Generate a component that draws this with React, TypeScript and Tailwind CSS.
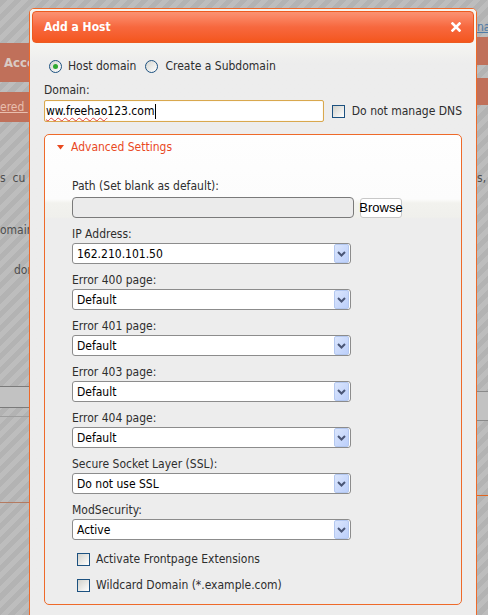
import React from "react";

const font = "font-['DejaVu_Sans_Condensed','DejaVu_Sans',sans-serif] [font-stretch:condensed]";

type Field = { label: string; value: string };

const fields: Field[] = [
  { label: "IP Address:", value: "162.210.101.50" },
  { label: "Error 400 page:", value: "Default" },
  { label: "Error 401 page:", value: "Default" },
  { label: "Error 403 page:", value: "Default" },
  { label: "Error 404 page:", value: "Default" },
  { label: "Secure Socket Layer (SSL):", value: "Do not use SSL" },
  { label: "ModSecurity:", value: "Active" },
];

function Radio({ checked }: { checked?: boolean }) {
  return (
    <span className="flex h-[13px] w-[13px] items-center justify-center rounded-full border border-[#1c5180] bg-linear-to-br from-[#d6d6d0] to-white">
      {checked && <span className="h-[5px] w-[5px] rounded-full bg-[#2fa82f]" />}
    </span>
  );
}

function Checkbox() {
  return (
    <span className="block h-[13px] w-[13px] shrink-0 border border-[#1c5180] bg-linear-to-br from-[#d2d2cc] to-white" />
  );
}

function Select({ value }: { value: string }) {
  return (
    <div className="flex h-[21px] w-[279px] items-center rounded-[3px] border border-[#8c8c8c] bg-white pl-[4px]">
      <span className="flex-1 text-[12px] leading-[14px] text-black">{value}</span>
      <span className="mr-[1px] flex h-[19px] w-[15px] items-center justify-center rounded-[2px] border border-[#b4c8f0] bg-linear-to-br from-[#dbe6fd] to-[#bccffa]">
        <svg width="9" height="6" viewBox="0 0 9 6">
          <path d="M1 1 L4.5 4.5 L8 1" fill="none" stroke="#4a5676" strokeWidth="2" />
        </svg>
      </span>
    </div>
  );
}

export default function App() {
  return (
    <div className={`relative h-[615px] w-[488px] overflow-hidden ${font}`}>
      {/* page behind the dialog */}
      <div className="flex h-full justify-between bg-[repeating-linear-gradient(135deg,#b3b3b3_0px,#b3b3b3_5px,#bdbdbd_5px,#bdbdbd_10px)]">
        <div className="w-[29px] whitespace-nowrap">
          <div className="h-[43px]" />
          <div className="flex h-[39px] w-[29px] items-center bg-[#c0705a] pl-[4px] text-[13px] font-bold text-[#d9cbc5]">Acco</div>
          <div className="h-[10px]" />
          <div className="flex h-[30px] w-[29px] items-center bg-[#c0705a] text-[12px] text-[#e9bfae] underline">ered&nbsp;</div>
          <div className="h-[49px]" />
          <div className="text-[12px] leading-[14px] text-[#4e4e4e]">s&nbsp;&nbsp;cu</div>
          <div className="h-[38px]" />
          <div className="text-[12px] leading-[14px] text-[#4e4e4e]">omain</div>
          <div className="h-[26px]" />
          <div className="pl-[14px] text-[12px] leading-[14px] text-[#4e4e4e]">doma</div>
          <div className="h-[109px]" />
          <div className="h-[22px] border-y border-[#7a7a7a] bg-[#c2c2c2]" />
          <div className="h-[8px]" />
          <div className="h-px bg-[#9e9e9e]" />
          <div className="h-[85px]" />
          <div className="h-px bg-[#b47a60]" />
        </div>
        <div className="w-[11px] overflow-hidden whitespace-nowrap">
          <div className="h-[20px]" />
          <div className="h-[15px] text-[12px] leading-[14px] text-[#4f7ba6] underline">na</div>
          <div className="h-[2px]" />
          <div className="h-[28px] bg-[#c0705a]" />
          <div className="h-[13px]" />
          <div className="h-[27px] bg-[#c0705a]" />
          <div className="h-[66px]" />
          <div className="text-[12px] leading-[14px] text-[#4e4e4e]">s,</div>
          <div className="h-[206px]" />
          <div className="h-[30px] border-y border-[#8a8a8a] bg-[#c2c2c2]" />
          <div className="h-[74px]" />
          <div className="h-px bg-[#e0651f]" />
        </div>
      </div>

      {/* dialog */}
      <div className="absolute top-[8px] left-[29px] h-[640px] w-[448px] rounded-t-[5px] border border-[#ee6a2a] bg-[#ededed]">
        <div className="rounded-t-[4px] bg-[#f6f6f2] p-[2px] pb-0">
          <div className="flex h-[32px] items-center justify-between rounded-[4px] border border-[#ec5b20] bg-linear-to-b from-[#fb9272] via-[#f7683e] to-[#f4561b] pr-[12px] pl-[11px]">
            <span className="text-[12px] font-bold text-white">Add a Host</span>
            <svg width="10" height="10" viewBox="0 0 10 10">
              <path d="M1.5 1.5 L8.5 8.5 M8.5 1.5 L1.5 8.5" stroke="white" strokeWidth="2.6" strokeLinecap="square" />
            </svg>
          </div>
        </div>

        <div className="bg-linear-to-b from-[#f5f5f1] to-[#ededed] to-[20px] px-[14px] pt-[15px] text-[12px] leading-[14px] text-[#2e2e2e]">
          <div className="flex h-[16px] items-center pl-[5px]">
            <Radio checked />
            <span className="ml-[6px]">Host domain</span>
            <span className="ml-[9px]">
              <Radio />
            </span>
            <span className="ml-[7px]">Create a Subdomain</span>
          </div>

          <div className="mt-[8px] leading-[16px]">Domain:</div>
          <div className="mt-[2px] flex items-center whitespace-nowrap">
            <div className="flex h-[22px] w-[282px] items-center rounded-[2px] border border-[#d9a84e] bg-white pl-[1px] shadow-[inset_0_0_1px_#e8c98a]">
              <span className="text-black">
                <span className="underline decoration-[#e0403a] decoration-wavy decoration-1 underline-offset-2">ww.freehao</span>123.com
              </span>
              <span className="ml-px h-[15px] w-px bg-black" />
            </div>
            <span className="ml-[8px]">
              <Checkbox />
            </span>
            <span className="ml-[7px]">Do not manage DNS</span>
          </div>

          <div className="mt-[12px] rounded-[5px] border border-[#ee6a2a] bg-[linear-gradient(to_bottom,#fefefe_0px,#fcfcfc_64px,#f2f2ee_68px,#f0f0ec_82px,#ededed_84px)] pb-[6px]">
            <div className="flex h-[20px] items-center pt-[4px] pl-[12px] text-[#e9491f]">
              <svg width="7" height="5" viewBox="0 0 7 5">
                <path d="M0 0 H7 L3.5 4.5 Z" fill="#e9491f" />
              </svg>
              <span className="ml-[7px]">Advanced Settings</span>
            </div>

            <div className="pl-[27px]">
              <div className="mt-[23px] leading-[16px]">Path (Set blank as default):</div>
              <div className="mt-[3px] flex items-center">
                <div className="h-[21px] w-[282px] rounded-[4px] border border-[#7a7a7a] bg-[#ebebeb]" />
                <div className="ml-[6px] flex h-[20px] w-[42px] items-center justify-center rounded-[3px] border border-[#c8c8c8] bg-white text-[13px] text-black font-['Liberation_Sans',sans-serif] [font-stretch:normal]">
                  Browse
                </div>
              </div>

              {fields.map((f) => (
                <div key={f.label} className="pt-[8px]">
                  <div className="leading-[16px]">{f.label}</div>
                  <div className="mt-[1px]">
                    <Select value={f.value} />
                  </div>
                </div>
              ))}

              <div className="mt-[6px] flex h-[26px] items-center pl-[5px]">
                <Checkbox />
                <span className="ml-[6px]">Activate Frontpage Extensions</span>
              </div>
              <div className="flex h-[26px] items-center pl-[5px]">
                <Checkbox />
                <span className="ml-[6px]">Wildcard Domain (*.example.com)</span>
              </div>
            </div>
          </div>
        </div>
      </div>
    </div>
  );
}
